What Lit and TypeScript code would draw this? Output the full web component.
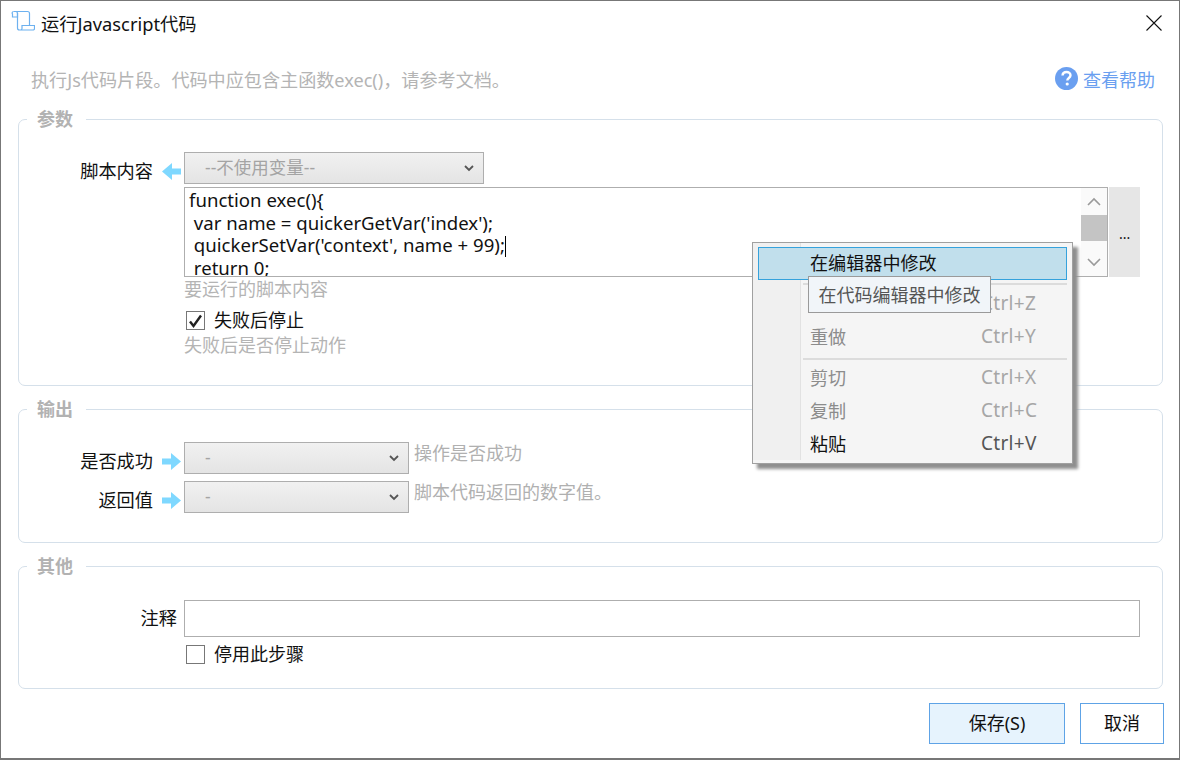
import { LitElement, html, css, svg } from "lit";
import { customElement } from "lit/decorators.js";

const chevron = html`<svg class="chev" width="10" height="7" viewBox="0 0 10 7"><path d="M1 1l4 4 4-4" fill="none" stroke="#555" stroke-width="1.800"/></svg>`;
const arrowPath = svg`<path d="M0 6.5h9V1l10 8.500-10 8.500v-5.500H0z" fill="#7fd8ff"/>`;
const arrowRight = html`<svg class="arrow" width="19" height="18" viewBox="0 0 19 18">${arrowPath}</svg>`;
const arrowLeft = html`<svg class="arrow flip" width="19" height="18" viewBox="0 0 19 18">${arrowPath}</svg>`;

@customElement("app-root")
export class AppRoot extends LitElement {
  static styles = css`
    :host {
      display: block; position: relative; width: 1180px; height: 760px; box-sizing: border-box;
      background: #fff; border: 1px solid #777; border-bottom-width: 2px; overflow: hidden;
      font-family: "Noto Sans", "Noto Sans CJK SC", sans-serif; font-size: 18px; color: #111;
    }
    .title { display: flex; align-items: center; height: 44px; padding-left: 10px; position: relative; }
    .title svg.logo { margin-right: 6px; margin-top: -4px; }
    .title .t { font-size: 18.300px; }
    .close { margin-left: auto; margin-right: 17px; display: block; }
    .desc { display: flex; align-items: center; height: 32px; margin-top: 19px; padding: 0 24px 0 30px; color: #b4b4b4; justify-content: space-between; }
    .desc .d { font-size: 18.130px; padding-bottom: 2px; }
    .help { display: flex; align-items: center; gap: 5px; color: #6a9ff0; margin-top: -3px; }
    .group { position: relative; margin: 0 16px 23px 17px; border: 1px solid #d5e0ea; border-radius: 7px; }
    .legend { position: absolute; left: 8px; top: -13px; background: #fff; padding: 0 13px 0 10px; font-weight: 700; font-size: 18px; line-height: 24px; color: #b2b2b2; }
    .g1 { padding: 32px 22px 28px 0; margin-top: 23px; height: 267px; box-sizing: border-box; }
    .g2 { padding: 32px 22px 29px 0; }
    .g3 { padding: 33px 22px 22px 0; margin-bottom: 14px; }
    .row { display: flex; align-items: center; }
    .label { width: 134px; text-align: right; flex: none; line-height: 24px; font-size: 18.200px; margin-top: 6px; }
    .label.wide { width: 158px; margin-right: 7px; margin-top: -2px; }
    .arrow { flex: none; margin: 6px 3px 0 9px; }
    .flip { transform: scaleX(-1); }
    .select { box-sizing: border-box; height: 32px; border: 1px solid #aeaeae; background: linear-gradient(#f1f1f1, #e4e4e4); color: #a4a4a4; font-size: 17.500px; display: flex; align-items: center; justify-content: space-between; padding: 0 9px 0 20px; }
    .select span { padding-bottom: 3px; }
    .s1 { width: 300px; }
    .s2 { width: 225px; }
    .side { color: #b0b0b0; margin-left: 5px; font-size: 18px; margin-top: -12px; }
    .under { margin-left: 165px; }
    .editor-row { display: flex; margin-top: 3px; height: 90px; }
    .editor { box-sizing: border-box; width: 925px; height: 90px; border: 1px solid #aeaeae; display: flex; background: #fff; overflow: hidden; }
    .code { flex: 1; padding: 1px 4px; font-size: 18.600px; line-height: 22.500px; white-space: pre; overflow: hidden; }
    .caret { display: inline-block; width: 1px; height: 21px; background: #000; vertical-align: -5px; }
    .scroll { width: 26px; flex: none; display: flex; flex-direction: column; align-items: stretch; background: #fafafa; }
    .sb { height: 27px; display: flex; align-items: center; justify-content: center; flex: none; }
    .thumb { height: 26px; background: #c4c4c4; flex: none; }
    .track { flex: 1; }
    .more { width: 31px; margin-left: 1px; background: #e6e6e6; display: flex; align-items: center; justify-content: center; font-size: 14px; padding-top: 3px; box-sizing: border-box; }
    .hint { color: #b4b4b4; line-height: 24px; font-size: 18px; }
    .hint.low { margin-top: 1px; }
    .check { display: flex; align-items: center; height: 24px; padding-left: 2px; font-size: 18px; }
    .check .txt { padding-bottom: 3px; }
    .box { box-sizing: border-box; width: 19px; height: 19px; border: 1px solid #777; margin: 1px 9px 0 0; background: #fff; display: flex; align-items: center; justify-content: center; flex: none; }
    .mt7 { margin-top: 7px; }
    .mt5 { margin-top: 5px; }
    .gap7 { margin-top: 7px; }
    .input { flex: 1; box-sizing: border-box; height: 37px; border: 1px solid #aeaeae; background: #fff; }
    .foot { display: flex; justify-content: flex-end; gap: 15px; padding-right: 15px; }
    .btn { box-sizing: border-box; height: 41px; border: 1px solid #5ea3e6; display: flex; align-items: center; justify-content: center; background: #fff; padding-bottom: 4px; }
    .save { width: 136px; background: #e6f3fd; }
    .cancel { width: 84px; }
    .menu { position: absolute; left: 751px; top: 241px; width: 321px; height: 222px; box-sizing: border-box; border: 1px solid #a0a0a0; background: #f5f5f5; box-shadow: 5px 5px 3px #8f8f8f; padding: 4px 5px; font-size: 18.100px; z-index: 2; }
    .gutter { position: absolute; left: 0; top: 0; bottom: 3px; width: 47px; background: #f0f0f0; border-right: 1px solid #e2e2e2; }
    .item { position: relative; box-sizing: border-box; height: 33px; display: flex; align-items: center; padding: 0 0 6px 52px; color: #8c8c8c; }
    .item .key { position: absolute; left: 223px; top: 2px; font-family: "Noto Sans", sans-serif; font-size: 19px; letter-spacing: .3px; line-height: 24px; color: #a6a6a6; }
    .item.on { color: #111; }
    .item.on .key { color: #555; }
    .item.hover { background: #c1dfec; outline: 1px solid #35a2dc; outline-offset: -1px; padding-bottom: 3px; }
    .sep { position: relative; height: 2px; margin: 3px 0 3px 45px; background: #dcdcdc; }
    .sep.first { margin: 3px 0 4px 45px; }
    .tip { position: absolute; left: 807px; top: 275px; width: 183px; height: 37px; box-sizing: border-box; border: 1px solid #9a9a9a; background: #f1f5f9; color: #555; font-size: 18px; display: flex; align-items: center; justify-content: center; padding-bottom: 2px; z-index: 3; }
  `;

  render() {
    return html`
      <div class="title">
        <svg class="logo" width="24" height="22" viewBox="0 0 24 22" fill="none" stroke="#6db1ef" stroke-width="1.200">
          <path d="M2.500 1.500h14a2 2 0 0 1 2 2v12"/><path d="M2.500 1.500a1.500 1.500 0 0 0-1 2.500v3h5V3a2 2 0 0 0-2-1.500"/>
          <path d="M6.500 3v15a2 2 0 0 0 2 2h14a1.500 1.500 0 0 0 1-1.500v-3H11v3a1.500 1.500 0 0 1-1.500 1.500"/>
        </svg>
        <span class="t">运行Javascript代码</span>
        <svg class="close" width="16" height="16" viewBox="0 0 16 16"><path d="M.5.500l15 15M15.500.500l-15 15" stroke="#111" stroke-width="1.100" fill="none"/></svg>
      </div>
      <div class="desc">
        <span class="d">执行Js代码片段。代码中应包含主函数exec()，请参考文档。</span>
        <span class="help">
          <svg width="23" height="23" viewBox="0 0 23 23"><circle cx="11.500" cy="11.500" r="11.500" fill="#6a9ff0"/><path d="M7.500 8.500c.2-2.300 1.900-3.500 4-3.500 2.300 0 4 1.400 4 3.300 0 2.700-3.200 2.700-3.200 5.200" fill="none" stroke="#fff" stroke-width="2.400"/><circle cx="12.200" cy="17" r="1.600" fill="#fff"/></svg>
          查看帮助
        </span>
      </div>

      <div class="group g1">
        <div class="legend">参数</div>
        <div class="row">
          <div class="label">脚本内容</div>${arrowLeft}
          <div class="select s1"><span>--不使用变量--</span>${chevron}</div>
        </div>
        <div class="under">
          <div class="editor-row">
            <div class="editor">
              <div class="code">function exec(){
 var name = quickerGetVar('index');
 quickerSetVar('context', name + 99);<span class="caret"></span>
 return 0;</div>
              <div class="scroll">
                <div class="sb"><svg width="14" height="9" viewBox="0 0 14 9"><path d="M1 8l6-6 6 6" fill="none" stroke="#9a9a9a" stroke-width="1.600"/></svg></div>
                <div class="thumb"></div>
                <div class="track"></div>
                <div class="sb"><svg width="14" height="9" viewBox="0 0 14 9"><path d="M1 1l6 6 6-6" fill="none" stroke="#9a9a9a" stroke-width="1.600"/></svg></div>
              </div>
            </div>
            <div class="more">...</div>
          </div>
          <div class="hint">要运行的脚本内容</div>
          <div class="check mt7">
            <span class="box"><svg width="15" height="14" viewBox="0 0 15 14"><path d="M2 7.500l3.500 4.500L13 1.500" fill="none" stroke="#222" stroke-width="2.400"/></svg></span><span class="txt">失败后停止</span>
          </div>
          <div class="hint low">失败后是否停止动作</div>
        </div>
      </div>

      <div class="group g2">
        <div class="legend">输出</div>
        <div class="row">
          <div class="label">是否成功</div>${arrowRight}
          <div class="select s2"><span>-</span>${chevron}</div>
          <div class="side">操作是否成功</div>
        </div>
        <div class="row gap7">
          <div class="label">返回值</div>${arrowRight}
          <div class="select s2"><span>-</span>${chevron}</div>
          <div class="side">脚本代码返回的数字值。</div>
        </div>
      </div>

      <div class="group g3">
        <div class="legend">其他</div>
        <div class="row">
          <div class="label wide">注释</div>
          <div class="input"></div>
        </div>
        <div class="under">
          <div class="check mt5"><span class="box"></span><span class="txt">停用此步骤</span></div>
        </div>
      </div>

      <div class="foot">
        <div class="btn save">保存(S)</div>
        <div class="btn cancel">取消</div>
      </div>

      <div class="menu">
        <div class="gutter"></div>
        <div class="item on hover">在编辑器中修改</div>
        <div class="sep first"></div>
        <div class="item">撤销<span class="key">Ctrl+Z</span></div>
        <div class="item">重做<span class="key">Ctrl+Y</span></div>
        <div class="sep"></div>
        <div class="item">剪切<span class="key">Ctrl+X</span></div>
        <div class="item">复制<span class="key">Ctrl+C</span></div>
        <div class="item on">粘贴<span class="key">Ctrl+V</span></div>
      </div>
      <div class="tip">在代码编辑器中修改</div>
    `;
  }
}
